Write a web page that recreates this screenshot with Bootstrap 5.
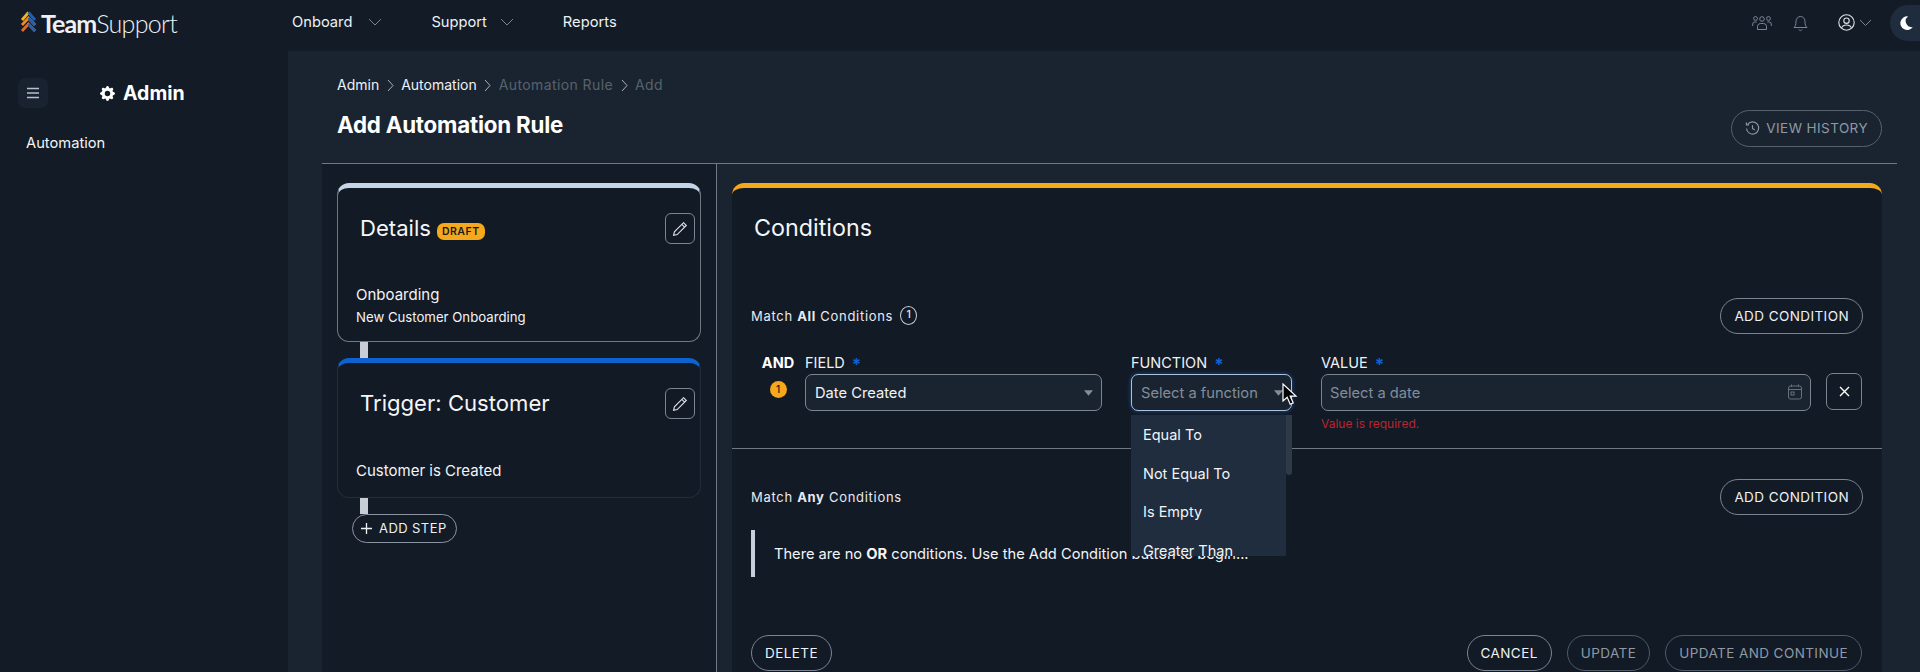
<!DOCTYPE html>
<html lang="en">
<head>
<meta charset="utf-8">
<title>Add Automation Rule</title>
<link href="https://cdn.jsdelivr.net/npm/bootstrap@5.3.0/dist/css/bootstrap.min.css" rel="stylesheet">
<style>
html,body{height:672px;overflow:hidden}
body{background:#131b27;color:#f2f4f7;font-family:Inter,"Liberation Sans",sans-serif;font-size:15px}
svg{display:block;flex:none}
.top-bar{height:51px;padding:0 0 6px;background:#131b27;flex-wrap:nowrap}
.brand-box{width:292px;padding-left:20px;gap:4px}
.brand-name{font-family:Lato,Inter,sans-serif;font-size:25px;line-height:30px;color:#eef1f4;letter-spacing:-.95px;font-weight:700}
.brand-name span{font-weight:300;letter-spacing:-.7px}
.top-link{color:#eef1f4;font-size:14.7px;text-decoration:none;display:flex;align-items:center}
.top-link:hover{color:#fff}
.chev-a{margin-left:16px}
.chev-b{margin-left:13px}
.link-support{margin-left:49px}
.link-reports{margin-left:49px}
.top-icons{color:#7b8591}
.bell-gap{margin-left:21px}
.user-gap{margin-left:30px}
.moon-btn{width:36px;height:36px;border-radius:50% 0 0 50%;background:#1e2c3d;margin-left:18px;padding-left:10px;display:flex;align-items:center;margin-right:-6px}
.shell{height:621px}
.side-col{width:288px;flex:none;padding:27px 18px 0}
.menu-btn{width:30px;height:30px;border-radius:7px;background:#182230;color:#b8c0ca;padding:0;border:0;display:flex;align-items:center;justify-content:center}
.side-title{font-size:19.5px;font-weight:700;color:#fff;line-height:30px;margin-left:52px}
.side-link{display:block;margin:25px 0 0 8px;font-size:14.7px;color:#f2f4f7;text-decoration:none;line-height:20px}
.main-col{background:#1a2431;padding-left:34px;padding-right:23px;min-width:0}
.head-row{height:112px;padding:24px 15px 0}
.crumbs{font-size:14px;line-height:20px;--bs-breadcrumb-divider:none;--bs-breadcrumb-margin-bottom:14px;--bs-breadcrumb-item-padding-x:0;gap:7.5px}
.crumbs .breadcrumb-item+.breadcrumb-item::before{display:none}
.crumbs a{color:#eef1f4;text-decoration:none}
.crumbs .muted-crumb{color:#58626e;letter-spacing:.4px}
.page-title{font-size:22.3px;font-weight:700;color:#fff;line-height:32px;margin:0;letter-spacing:-.2px}
.outline-pill{--bs-btn-color:#eef1f4;--bs-btn-border-color:#7b8591;--bs-btn-hover-color:#fff;--bs-btn-hover-bg:transparent;--bs-btn-hover-border-color:#aab;--bs-btn-disabled-color:#8f99a5;--bs-btn-disabled-border-color:#4f5a66;--bs-btn-disabled-opacity:1;border-radius:19px;font-size:13.5px;letter-spacing:.42px;font-weight:400;padding:0 13px;height:36px;display:inline-flex;align-items:center;gap:6px;white-space:nowrap}
.history-btn{--bs-btn-color:#8f99a5;--bs-btn-border-color:#566170;height:37px;margin-top:35px}
.work-row{border-top:1px solid #6f7883;height:510px}
.steps-col{width:395px;flex:none;padding:19px 15px 0;border-right:1px solid #6f7883;background:#131b27}
.step-card{background:#121a26;border:1px solid #6f7883;border-top:5px solid #c5d4e6;border-radius:12px;position:relative;color:#f2f4f7}
.details-card{height:159px}
.trigger-card{height:140px;border-color:#232d39;border-top-color:#0d62d0}
.step-title{font-size:22.1px;line-height:30px;margin:0;color:#f4f6f8;font-weight:400}
.title-row{padding:25px 5px 0 22px}
.draft-tag{background:#f5a81c;color:#1a1a1a;font-size:10.5px;font-weight:600;border-radius:7px;padding:3px 5px;letter-spacing:.5px;line-height:11px;margin-left:6px;vertical-align:1px}
.edit-btn{width:30px;height:31px;border:1px solid #7b8591;border-radius:6px;background:transparent;color:#dfe3e8;padding:0;display:flex;align-items:center;justify-content:center;flex:none}
.step-body{padding:0 0 0 18px;font-size:15px;line-height:20px}
.details-card .step-body{margin-top:41px}
.trigger-card .step-body{margin-top:42px}
.step-sub{font-size:13.2px;margin-top:2px}
.link-bar{width:8px;height:16px;background:#c9ced6;margin-left:23px}
.add-step{height:29px;border-radius:15px;margin-left:15px;padding:0 9px 0 7px;font-size:13px;--bs-btn-border-color:#8b95a1}
.cond-col{padding:19px 15px 0 15px;min-width:0}
.cond-card{background:#121a26;border-top:5px solid #f5a81c;border-radius:12px 12px 0 0;height:490px;position:relative}
.cond-title{font-size:23.3px;line-height:30px;padding:25px 0 0 22px;margin:0;font-weight:400;color:#f4f6f8}
.match-row{padding:0 19px;height:36px}
.match-all{margin-top:55px}
.match-any{margin-top:30px}
.match-label{font-size:13px;letter-spacing:.7px;color:#e8ebef;padding-top:1px}
.count-ring{width:17px;height:19px;border:1px solid #c8ced6;border-radius:50%;font-size:10.5px;display:inline-flex;align-items:center;justify-content:center;margin-left:7px;font-weight:500;letter-spacing:0;margin-top:-3px}
.rule-row{padding:0 20px 0 29px;margin-top:18px;height:90px;gap:10px}
.and-col{width:34px;flex:none;text-align:center}
.and-word{font-weight:700;font-size:14.5px;line-height:21px;color:#fff}
.num-dot{width:17px;height:17px;background:#f5a81c;border-radius:50%;color:#1a1a1a;font-size:10px;display:flex;align-items:center;justify-content:center;margin:8px auto 0;font-weight:500}
.field-label{font-size:14.5px;line-height:21px;color:#eef1f4;display:block;margin:0;white-space:nowrap}
.req-star{color:#0d62d0;font-weight:700;margin-left:7px;font-size:17px;line-height:1;vertical-align:-3px}
.field-w{width:297px}
.func-w{width:161px;margin-left:19px}
.value-w{margin-left:19px}
.dark-input{background-color:#1a2431;border:1px solid #7b8591;border-radius:7px;height:37px;color:#f2f4f7;font-size:14.7px;padding:1px 8px 0;box-shadow:none}
.form-select.dark-input{padding-left:9px}
.dark-input::placeholder{color:#838d99}
.dark-input:focus{background-color:#1a2431;color:#f2f4f7;border-color:#7b8591;box-shadow:none}
.form-select.dark-input{background-image:url("data:image/svg+xml,%3Csvg xmlns='http://www.w3.org/2000/svg' viewBox='0 0 10 6'%3E%3Cpath fill='%23838d99' d='M0 0h10L5 6z'/%3E%3C/svg%3E");background-size:9px 6px;background-position:right 8px center}
.active-select{color:#838d99!important;border-color:#a9c2dd!important;box-shadow:0 0 4px #1d4f8a!important}
.cal-icon{position:absolute;right:9px;top:10px;color:#67717d}
.err-text{color:#b8262e;font-size:12px;line-height:16px;margin-top:5px}
.close-btn{width:36px;height:37px;padding:0;border:1px solid #7b8591;border-radius:7px;background:transparent;color:#fff;display:flex;align-items:center;justify-content:center;margin-top:21px;flex:none;margin-left:5px}
.cond-rule{border-top:1px solid #6f7883;margin-top:6px}
.note-box{margin:15px 0 0 19px;border-left:4px solid #c5d0dc;height:47px;padding-left:19px;font-size:14.65px;line-height:49px;color:#f2f4f7}
.action-row{padding:0 20px 0 19px;position:absolute;left:0;right:0;top:447px}
.action-gap{gap:15px}
.disabled-txt{color:#8f99a5}
.fn-menu{position:absolute;left:399px;top:227px;width:161px;height:141px;display:flex;z-index:5}
.fn-list{width:155px;background:#1f2d3f;overflow:hidden;padding:1px 0 0;margin:0;list-style:none;font-size:14.5px;color:#f2f4f7}
.fn-list li{padding:0 12px;height:38.5px;line-height:38.5px}
.fn-scroll{width:6px;height:60px;background:#2f3a47;border-radius:0 0 3px 3px}
.cursor-mark{position:absolute;left:1282px;top:332px;z-index:9}
.main-wrap{position:relative}
</style>
</head>
<body class="d-flex flex-column">
<nav class="navbar top-bar d-flex align-items-center">
  <div class="brand-box d-flex align-items-center">
    <svg width="17" height="25" viewBox="0 0 17 25" fill="none" stroke-width="2.8"><path d="M2 10 8.5 2.5" stroke="#f5b41e"/><path d="M8.5 2.5 15 10" stroke="#1f62b5"/><path d="M2 15 8.5 8 15 15" stroke="#ee8a24"/><path d="M8.5 8 15 15" stroke="#1f62b5"/><path d="M2 21 8.5 14 15 21" stroke="#e56a26"/><path d="M8.5 14 15 21" stroke="#1f62b5"/></svg>
    <div class="brand-name">Team<span>Support</span></div>
  </div>
  <a class="top-link" href="#">Onboard<svg class="chev-a" width="14" height="8" viewBox="0 0 14 8" fill="none" stroke="#7b8591"><path d="m1 1 6 6 6-6"/></svg></a>
  <a class="top-link link-support" href="#">Support<svg class="chev-b" width="14" height="8" viewBox="0 0 14 8" fill="none" stroke="#7b8591"><path d="m1 1 6 6 6-6"/></svg></a>
  <a class="top-link link-reports" href="#">Reports</a>
  <div class="top-icons d-flex align-items-center ms-auto">
    <svg width="20" height="16" viewBox="0 0 20 16" fill="none" stroke="currentColor" stroke-width="1"><circle cx="10" cy="4" r="2.3"/><circle cx="3.5" cy="3.5" r="1.9"/><circle cx="16.5" cy="3.5" r="1.9"/><path d="M5.5 14.5v-3a3 3 0 0 1 3-3h3a3 3 0 0 1 3 3v3z"/><path d="M.7 11V9a2 2 0 0 1 2-2h2M19.3 11V9a2 2 0 0 0-2-2h-2"/></svg>
    <svg class="bell-gap" width="15" height="16" viewBox="0 0 15 16" fill="none" stroke="currentColor" stroke-width="1"><path d="M1 12.500h13c-1.400-1.500-2-2.500-2-6 0-3-2-5-4.500-5S3 3.500 3 6.500c0 3.500-.6 4.500-2 6z"/><path d="M6 14.500a1.600 1.600 0 0 0 3 0"/></svg>
    <svg class="user-gap" width="17" height="17" viewBox="0 0 17 17" fill="none" stroke="#dfe3e8" stroke-width="1.100"><circle cx="8.500" cy="8.500" r="7.700"/><circle cx="8.500" cy="6.700" r="2.700"/><path d="M3.500 14c.8-2 2.500-3 5-3s4.200 1 5 3"/></svg>
    <svg class="ms-1" width="13" height="8" viewBox="0 0 13 8" fill="none" stroke="#7b8591"><path d="m1 1 5.500 5.500L12 1"/></svg>
    <div class="moon-btn"><svg width="13" height="14" viewBox="0 0 13 14"><path fill="#fff" d="M8 .4A6.800 6.800 0 1 0 12.800 11 6 6 0 0 1 8 .4z"/></svg></div>
  </div>
</nav>
<div class="shell d-flex main-wrap">
  <aside class="side-col">
    <div class="d-flex align-items-center">
      <button class="menu-btn" type="button" aria-label="Menu"><svg width="14" height="12" viewBox="0 0 14 12" fill="none" stroke="currentColor" stroke-width="1.300"><path d="M1 1.500h12M1 6h12M1 10.500h12"/></svg></button>
      <div class="side-title d-flex align-items-center"><svg class="me-2" width="15" height="15" viewBox="0 0 16 16" fill="#fff"><path d="M9.405 1.050c-.413-1.400-2.397-1.400-2.810 0l-.1.340a1.464 1.464 0 0 1-2.105.872l-.31-.17c-1.283-.698-2.686.705-1.987 1.987l.169.311c.446.820.023 1.841-.872 2.105l-.34.100c-1.400.413-1.400 2.397 0 2.810l.340.100a1.464 1.464 0 0 1 .872 2.105l-.17.310c-.698 1.283.705 2.686 1.987 1.987l.311-.169a1.464 1.464 0 0 1 2.105.872l.100.340c.413 1.400 2.397 1.400 2.810 0l.100-.340a1.464 1.464 0 0 1 2.105-.872l.310.170c1.283.698 2.686-.705 1.987-1.987l-.169-.311a1.464 1.464 0 0 1 .872-2.105l.340-.100c1.400-.413 1.400-2.397 0-2.810l-.340-.100a1.464 1.464 0 0 1-.872-2.105l.170-.310c.698-1.283-.705-2.686-1.987-1.987l-.311.169a1.464 1.464 0 0 1-2.105-.872l-.100-.340zM8 10.930a2.929 2.929 0 1 1 0-5.860 2.929 2.929 0 0 1 0 5.860z"/></svg>Admin</div>
    </div>
    <a class="side-link" href="#">Automation</a>
  </aside>
  <main class="main-col flex-grow-1">
    <div class="head-row d-flex justify-content-between">
      <div>
        <nav aria-label="breadcrumb">
          <ol class="breadcrumb crumbs align-items-center">
            <li class="breadcrumb-item"><a href="#">Admin</a></li>
            <li><svg width="7" height="13" viewBox="0 0 7 13" fill="none" stroke="#aab2bc"><path d="m1 1 5 5.500-5 5.500"/></svg></li>
            <li class="breadcrumb-item"><a href="#">Automation</a></li>
            <li><svg width="7" height="13" viewBox="0 0 7 13" fill="none" stroke="#aab2bc"><path d="m1 1 5 5.500-5 5.500"/></svg></li>
            <li class="breadcrumb-item muted-crumb">Automation Rule</li>
            <li><svg width="7" height="13" viewBox="0 0 7 13" fill="none" stroke="#aab2bc"><path d="m1 1 5 5.500-5 5.500"/></svg></li>
            <li class="breadcrumb-item muted-crumb">Add</li>
          </ol>
        </nav>
        <h1 class="page-title">Add Automation Rule</h1>
      </div>
      <button class="btn outline-pill history-btn" type="button"><svg width="15" height="15" viewBox="0 0 16 16" fill="none" stroke="currentColor" stroke-width="1.200"><path d="M3 3.400A6.500 6.500 0 1 1 1.600 8"/><path d="M1.500 1.500v2.600h2.700M8 4.500V8l2.500 1.500"/></svg>VIEW HISTORY</button>
    </div>
    <div class="work-row d-flex">
      <section class="steps-col">
        <div class="step-card details-card">
          <div class="title-row d-flex justify-content-between align-items-start">
            <h2 class="step-title">Details<span class="badge draft-tag">DRAFT</span></h2>
            <button class="edit-btn" type="button" aria-label="Edit"><svg width="16" height="16" viewBox="0 0 16 16" fill="none" stroke="currentColor" stroke-width="1.100"><path d="M11.500 1.700 14.300 4.500 5.200 13.600 1.600 14.400 2.400 10.800zM9.800 3.400l2.800 2.800"/></svg></button>
          </div>
          <div class="step-body"><div>Onboarding</div><div class="step-sub">New Customer Onboarding</div></div>
        </div>
        <div class="link-bar"></div>
        <div class="step-card trigger-card">
          <div class="title-row d-flex justify-content-between align-items-start">
            <h2 class="step-title">Trigger: Customer</h2>
            <button class="edit-btn" type="button" aria-label="Edit"><svg width="16" height="16" viewBox="0 0 16 16" fill="none" stroke="currentColor" stroke-width="1.100"><path d="M11.500 1.700 14.300 4.500 5.200 13.600 1.600 14.400 2.400 10.800zM9.800 3.400l2.800 2.800"/></svg></button>
          </div>
          <div class="step-body">Customer is Created</div>
        </div>
        <div class="link-bar"></div>
        <button class="btn outline-pill add-step" type="button"><svg width="13" height="13" viewBox="0 0 13 13" fill="none" stroke="currentColor" stroke-width="1.300"><path d="M6.500 1v11M1 6.500h11"/></svg>ADD STEP</button>
      </section>
      <section class="cond-col flex-grow-1">
        <div class="cond-card">
          <h2 class="cond-title">Conditions</h2>
          <div class="match-row match-all d-flex justify-content-between align-items-center">
            <div class="match-label d-flex align-items-center"><span>Match <b>All</b> Conditions</span><span class="count-ring">1</span></div>
            <button class="btn outline-pill" type="button">ADD CONDITION</button>
          </div>
          <div class="rule-row d-flex">
            <div class="and-col"><div class="and-word">AND</div><div class="num-dot">1</div></div>
            <div class="field-w"><label class="field-label">FIELD<span class="req-star">*</span></label><select class="form-select dark-input"><option>Date Created</option></select></div>
            <div class="func-w"><label class="field-label">FUNCTION<span class="req-star">*</span></label><select class="form-select dark-input active-select"><option>Select a function</option></select></div>
            <div class="flex-grow-1 value-w"><label class="field-label">VALUE<span class="req-star">*</span></label>
              <div class="position-relative"><input class="form-control dark-input" placeholder="Select a date"><svg class="cal-icon" width="14" height="16" viewBox="0 0 14 16" fill="none" stroke="currentColor"><rect x=".5" y="2" width="13" height="13" rx="2"/><path d="M.5 5.500h13M3.500.5V3M10.500.5V3"/><rect x="3" y="8" width="3" height="3"/></svg></div>
              <div class="err-text">Value is required.</div></div>
            <button class="close-btn" type="button" aria-label="Remove"><svg width="11" height="11" viewBox="0 0 11 11" fill="none" stroke="currentColor" stroke-width="1.400"><path d="m1 1 9 9M10 1l-9 9"/></svg></button>
          </div>
          <div class="fn-menu"><ul class="fn-list"><li>Equal To</li><li>Not Equal To</li><li>Is Empty</li><li>Greater Than</li></ul><div class="fn-scroll"></div></div>
          <div class="cond-rule"></div>
          <div class="match-row match-any d-flex justify-content-between align-items-center">
            <div class="match-label">Match <b>Any</b> Conditions</div>
            <button class="btn outline-pill" type="button">ADD CONDITION</button>
          </div>
          <div class="note-box">There are no <b>OR</b> conditions. Use the Add Condition button to begin...</div>
          <div class="action-row d-flex">
            <button class="btn outline-pill" type="button">DELETE</button>
            <div class="ms-auto d-flex action-gap">
              <button class="btn outline-pill" type="button">CANCEL</button>
              <button class="btn outline-pill disabled-txt" type="button" disabled>UPDATE</button>
              <button class="btn outline-pill disabled-txt" type="button" disabled>UPDATE AND CONTINUE</button>
            </div>
          </div>
        </div>
      </section>
    </div>
  </main>
  <svg class="cursor-mark" width="16" height="23" viewBox="0 0 16 23"><path fill="#000" stroke="#fff" stroke-width="1.200" d="M1 1v17l4.200-3.800 3 7 3-1.300-3-6.800H14z"/></svg>
</div>
<script src="https://cdn.jsdelivr.net/npm/bootstrap@5.3.0/dist/js/bootstrap.bundle.min.js"></script>
</body>
</html>
